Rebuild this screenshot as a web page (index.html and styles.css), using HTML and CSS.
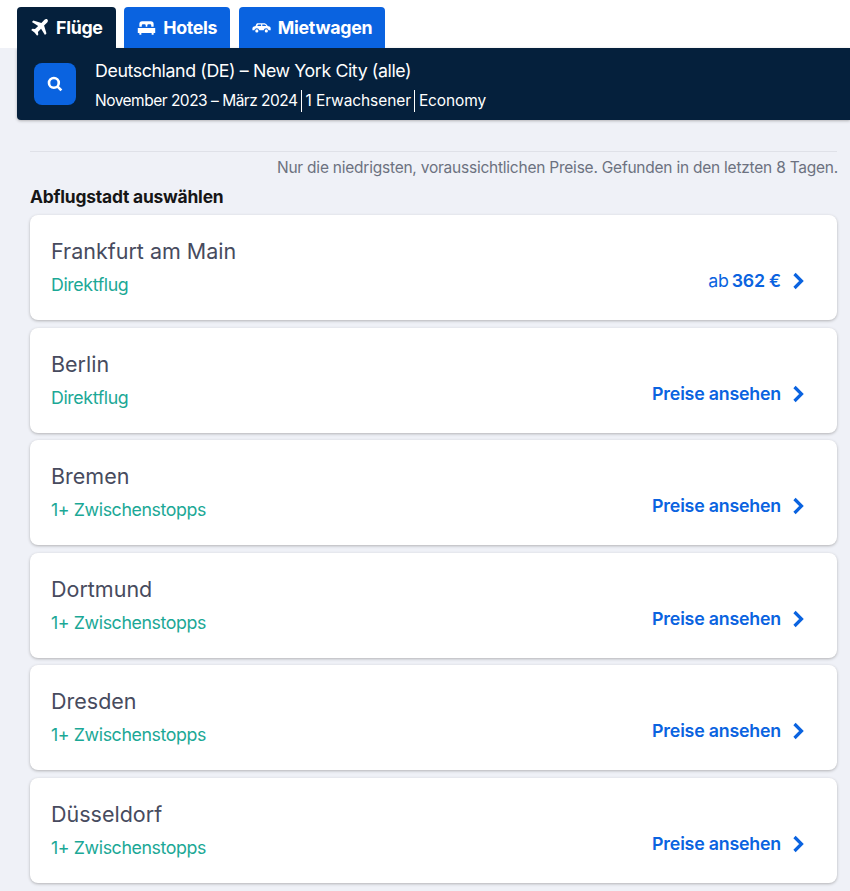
FILE: index.html
```html
<!DOCTYPE html>
<html lang="de">
<head>
    <meta charset="UTF-8">
    <meta name="viewport" content="width=device-width, initial-scale=1.0">
    <title>Flüge</title>
    <link rel="stylesheet" href="styles.css">
</head>
<body>
    <div class="topBar">
        <nav class="tabs">
            <a class="tab active">
                <svg class="tabIcon" viewBox="0 0 24 24"><path d="M22 2c-1-1-2.700-.7-3.700.3l-3.900 3.900L4.300 3.200 2.400 5.100l7.900 4.900-4 4-3.200-.5L1.500 15l4.200 3.300L9 22.500l1.500-1.600-.5-3.200 4-4 4.900 7.900 1.900-1.900-3-10.100 3.900-3.900C22.700 4.700 23 3 22 2z"/></svg>
                Flüge
            </a>
            <a class="tab">
                <svg class="tabIcon" viewBox="0 0 24 24"><path d="M6.500 4h11A3.500 3.500 0 0 1 21 7.500V11h-3V9.500A1.500 1.500 0 0 0 16.500 8h-2A1.500 1.500 0 0 0 13 9.500V11h-2V9.500A1.500 1.500 0 0 0 9.500 8h-2A1.500 1.500 0 0 0 6 9.500V11H3V7.500A3.500 3.500 0 0 1 6.500 4zM1 12.500h22V19h-2v2h-2.500v-2h-13v2H3v-2H1z"/></svg>
                Hotels
            </a>
            <a class="tab">
                <svg class="tabIcon" viewBox="0 0 24 24"><path d="M7.500 6.500h7.500c1.600 0 2.900.7 3.800 2l1 1.500 2.200.8c1 .4 1.600 1.200 1.600 2.300v2.400h-2.700a3.200 3.200 0 0 0-6.200 0H9.200a3.200 3.200 0 0 0-6.200 0H.5v-2.200c0-1.300.8-2.300 2-2.700l2-.6.700-1.800c.4-1.200 1.100-1.700 2.300-1.700zm.8 1.800c-.6 0-1 .3-1.200.8l-.4 1h4.800V8.300zm4.700 0v1.800h5l-.6-.8c-.4-.6-1-1-1.800-1zM6.100 14.300a2 2 0 1 1 0 4 2 2 0 0 1 0-4zm12 0a2 2 0 1 1 0 4 2 2 0 0 1 0-4z"/></svg>
                Mietwagen
            </a>
        </nav>
    </div>

    <div class="searchBar">
        <div class="searchButton">
            <svg viewBox="0 0 24 24"><circle cx="10.500" cy="10.500" r="6.500"/><path d="M15.500 15.500 20.500 20.500"/></svg>
        </div>
        <div class="searchText">
            <div class="route">Deutschland (DE) – New York City (alle)</div>
            <div class="details">
                <span class="dates">November 2023 – März 2024</span>
                <span class="detail">1 Erwachsener</span>
                <span class="detail">Economy</span>
            </div>
        </div>
    </div>

    <main class="content">
        <p class="note">Nur die niedrigsten, voraussichtlichen Preise. Gefunden in den letzten 8 Tagen.</p>
        <h2 class="title">Abflugstadt auswählen</h2>

        <div class="cityList">
            <a class="city">
                <div>
                    <div class="cityName">Frankfurt am Main</div>
                    <div class="stops">Direktflug</div>
                </div>
                <div class="price"><span class="from">ab</span> <b class="amount">362 €</b><svg class="chevron" viewBox="0 0 12 18"><path d="M2.500 2 9.500 9 2.500 16"/></svg></div>
            </a>
            <a class="city">
                <div>
                    <div class="cityName">Berlin</div>
                    <div class="stops">Direktflug</div>
                </div>
                <div class="price"><b>Preise ansehen</b><svg class="chevron" viewBox="0 0 12 18"><path d="M2.500 2 9.500 9 2.500 16"/></svg></div>
            </a>
            <a class="city">
                <div>
                    <div class="cityName">Bremen</div>
                    <div class="stops">1+ Zwischenstopps</div>
                </div>
                <div class="price"><b>Preise ansehen</b><svg class="chevron" viewBox="0 0 12 18"><path d="M2.500 2 9.500 9 2.500 16"/></svg></div>
            </a>
            <a class="city">
                <div>
                    <div class="cityName">Dortmund</div>
                    <div class="stops">1+ Zwischenstopps</div>
                </div>
                <div class="price"><b>Preise ansehen</b><svg class="chevron" viewBox="0 0 12 18"><path d="M2.500 2 9.500 9 2.500 16"/></svg></div>
            </a>
            <a class="city">
                <div>
                    <div class="cityName">Dresden</div>
                    <div class="stops">1+ Zwischenstopps</div>
                </div>
                <div class="price"><b>Preise ansehen</b><svg class="chevron" viewBox="0 0 12 18"><path d="M2.500 2 9.500 9 2.500 16"/></svg></div>
            </a>
            <a class="city">
                <div>
                    <div class="cityName">Düsseldorf</div>
                    <div class="stops">1+ Zwischenstopps</div>
                </div>
                <div class="price"><b>Preise ansehen</b><svg class="chevron" viewBox="0 0 12 18"><path d="M2.500 2 9.500 9 2.500 16"/></svg></div>
            </a>
        </div>
    </main>
</body>
</html>
```

FILE: styles.css
```css
* {
    box-sizing: border-box;
}

body {
    margin: 0;
    height: 891px;
    overflow: hidden;
    background-color: #eff1f7;
    font-family: "Inter", "Liberation Sans", sans-serif;
}

.topBar {
    height: 48px;
    padding: 7px 0 0 17px;
    background-color: #fff;
}

.tabs {
    display: flex;
    gap: 8.500px;
}

.tab {
    display: flex;
    align-items: center;
    gap: 7px;
    height: 41px;
    padding: 0 13px;
    border-radius: 4px 4px 0 0;
    background-color: #0a63e0;
    color: #fff;
    font-size: 17.800px;
    font-weight: 700;
    letter-spacing: -0.3px;
}

.tab.active {
    background-color: #05203c;
}

.tabIcon {
    width: 19px;
    height: 19px;
    fill: #fff;
}

.searchBar {
    display: flex;
    align-items: center;
    gap: 19px;
    height: 72px;
    margin-left: 17px;
    padding-left: 17px;
    border-radius: 0 0 0 4px;
    background-color: #05203c;
    box-shadow: 0 1px 3px rgba(37, 32, 31, 0.3);
    color: #fff;
}

.searchButton {
    display: flex;
    align-items: center;
    justify-content: center;
    width: 42px;
    height: 42px;
    border-radius: 8px;
    background-color: #0a63e0;
}

.searchButton svg {
    width: 18px;
    height: 18px;
    fill: none;
    stroke: #fff;
    stroke-width: 3.500;
}

.searchText {
    padding-top: 3px;
}

.route {
    font-size: 17.800px;
    letter-spacing: -0.4px;
    line-height: 24px;
}

.details {
    display: flex;
    margin-top: 7px;
    font-size: 15.500px;
    letter-spacing: -0.1px;
    line-height: 22px;
}

.dates {
    letter-spacing: -0.5px;
}

.detail {
    margin-left: 3px;
    padding-left: 4px;
    border-left: 1px solid #fff;
}

.content {
    margin: 31px 13px 0 30px;
    padding-top: 7px;
    border-top: 1px solid #dfe1e8;
}

.note {
    margin: 0 -1px 0 0;
    color: #6c7180;
    font-size: 15.500px;
    letter-spacing: -0.23px;
    line-height: 18px;
    text-align: right;
}

.title {
    margin: 10px 0 8px;
    color: #161616;
    font-size: 17.400px;
    font-weight: 700;
    letter-spacing: -0.2px;
    line-height: 20px;
}

.cityList {
    display: flex;
    flex-direction: column;
    gap: 7.600px;
}

.city {
    display: flex;
    align-items: flex-end;
    justify-content: space-between;
    height: 105px;
    padding: 22px 33px 24px 21px;
    border-radius: 8px;
    background-color: #fff;
    box-shadow: 0 1px 3px rgba(37, 32, 31, 0.3);
}

.cityName {
    color: #474b5e;
    font-size: 21.500px;
    line-height: 28px;
}

.stops {
    margin-top: 9px;
    color: #1ba896;
    font-size: 17.800px;
    letter-spacing: -0.4px;
    line-height: 22px;
}

.price {
    display: flex;
    align-items: center;
    margin-bottom: 3px;
    color: #0a63e0;
    font-size: 17.800px;
    letter-spacing: -0.2px;
    line-height: 24px;
}

.price b {
    font-weight: 600;
}

.from {
    margin-right: 3px;
    font-weight: 400;
}

.chevron {
    width: 12px;
    height: 18px;
    margin-left: 11px;
    fill: none;
    stroke: #0a63e0;
    stroke-width: 3.200;
}
```
